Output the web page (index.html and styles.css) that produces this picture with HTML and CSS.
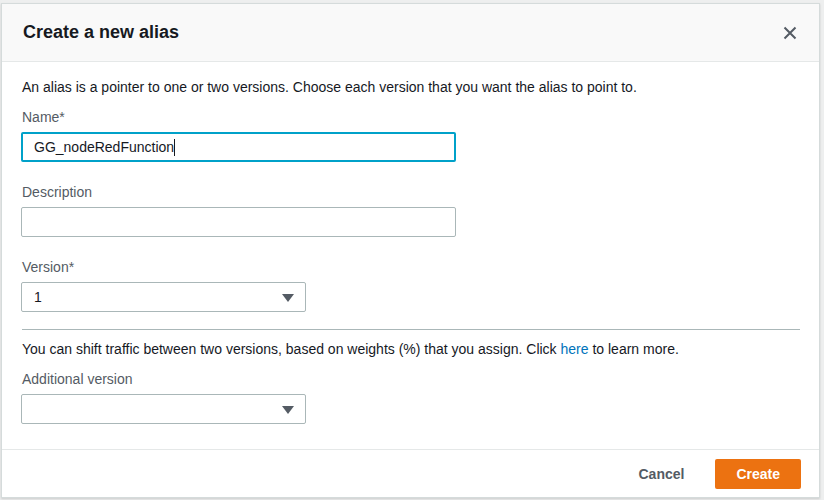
FILE: index.html
```html
<html>
<head>
	<title>Create a new alias</title>
	<link rel="stylesheet" href="styles.css">
</head>
<body>

<div class='modal'>
	<div class='modal-head'>
		<h2 class='title'>Create a new alias</h2>
		<span class='close'>
			<svg width="14" height="14" viewBox="0 0 14 14"><path d="M1.5 1.5 L12.5 12.5 M12.5 1.5 L1.5 12.5" stroke="#545b64" stroke-width="2" fill="none"/></svg>
		</span>
	</div>

	<div class='modal-body'>
		<p class='intro'>An alias is a pointer to one or two versions. Choose each version that you want the alias to point to.</p>

		<label class='lbl'>Name*</label>
		<div class='field focus wide'>GG_nodeRedFunction<span class='caret'></span></div>

		<label class='lbl'>Description</label>
		<div class='field wide'></div>

		<label class='lbl'>Version*</label>
		<div class='field select'>1<span class='arrow'></span></div>

		<hr class='sep'>

		<p class='intro'>You can shift traffic between two versions, based on weights (%) that you assign. Click <a href='#'>here</a> to learn more.</p>

		<label class='lbl'>Additional version</label>
		<div class='field select last'><span class='arrow'></span></div>
	</div>

	<div class='modal-foot'>
		<span class='btn-link'>Cancel</span>
		<span class='btn-main'>Create</span>
	</div>
</div>

</body>
</html>
```

FILE: styles.css
```css
body{
	margin:0;
	padding:3px 0 0 1px;
	background-color:#eeefef;
	font-family:"Liberation Sans", Arial, sans-serif;
	color:#16191f;
	font-size:14px;
}
.modal{
	width:817px;
	background-color:#fff;
	border:1px solid #d5dbdb;
	box-shadow:0 1px 2px rgba(0,0,0,0.15);
}
.modal-head{
	display:flex;
	align-items:center;
	justify-content:space-between;
	height:57px;
	padding:0 22px 0 21px;
	background-color:#f9f9f9;
	border-bottom:1px solid #e5e8e8;
}
.title{
	margin:0;
	font-size:18px;
	font-weight:bold;
	color:#16191f;
}
.close{
	display:flex;
	margin-top:1px;
}
.modal-body{
	padding:15px 19px 25px 20px;
}
.intro{
	margin:0;
	line-height:20px;
}
.intro a{
	color:#0073bb;
	text-decoration:none;
}
.lbl{
	display:block;
	margin-top:10px;
	line-height:20px;
	color:#545b64;
}
.field{
	box-sizing:border-box;
	height:30px;
	margin:5px 0 20px -1px;
	padding:0 11px 0 12px;
	border:1px solid #aab7b8;
	border-radius:2px;
	line-height:28px;
	color:#16191f;
	position:relative;
}
.field.last{
	margin-bottom:0;
}
.wide{
	width:435px;
}
.focus{
	border:2px solid #00a1c9;
	padding:0 10px 0 11px;
	line-height:26px;
}
.caret{
	display:inline-block;
	width:1px;
	height:17px;
	background-color:#16191f;
	vertical-align:middle;
	margin-top:-2px;
}
.select{
	width:285px;
}
.arrow{
	position:absolute;
	right:11px;
	top:11px;
	width:0;
	height:0;
	border-left:6px solid transparent;
	border-right:6px solid transparent;
	border-top:8px solid #545b64;
}
.sep{
	margin:-3px 0 0 0;
	border:0;
	border-top:1px solid #aab7b8;
}
.sep + .intro{
	margin-top:9px;
}
.modal-foot{
	display:flex;
	justify-content:flex-end;
	align-items:center;
	gap:10px;
	height:47px;
	padding:0 18px;
	border-top:1px solid #e5e8e8;
}
.btn-link{
	padding:0 21px;
	font-weight:bold;
	color:#545b64;
	line-height:30px;
	cursor:pointer;
}
.btn-main{
	padding:0 21px;
	height:30px;
	line-height:30px;
	background-color:#ec7211;
	color:#fff;
	font-weight:bold;
	border-radius:2px;
	cursor:pointer;
}
```
